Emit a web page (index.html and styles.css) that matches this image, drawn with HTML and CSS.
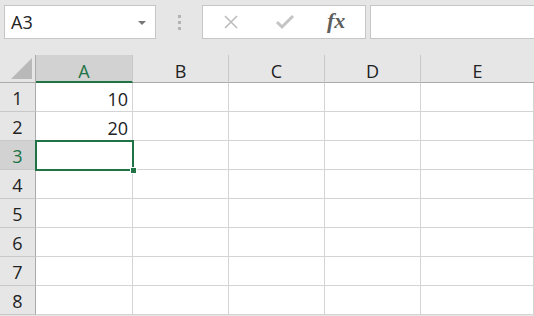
FILE: index.html
```html
<!DOCTYPE html>
<html lang="en">
<head>
    <meta charset="UTF-8">
    <title>Sheet</title>
    <link rel="stylesheet" href="styles.css">
</head>
<body>
    <div class="toolbar">
        <div class="name-box">
            <span>A3</span>
            <span class="arrow"></span>
        </div>
        <div class="grip"><i></i><i></i><i></i></div>
        <div class="buttons">
            <svg class="btn" width="16" height="16" viewBox="0 0 16 16">
                <path d="M2 2 L14 14 M14 2 L2 14" stroke="#bcbcbc" stroke-width="1.6" fill="none"/>
            </svg>
            <svg class="btn" width="20" height="16" viewBox="0 0 20 16">
                <path d="M2 8 L7 13 L18 2" stroke="#c4c4c4" stroke-width="3" fill="none"/>
            </svg>
            <span class="fx">fx</span>
        </div>
        <div class="formula"></div>
    </div>

    <div class="sheet">
        <div class="corner"><span class="tri"></span></div>
        <div class="col-head active">A</div>
        <div class="col-head">B</div>
        <div class="col-head">C</div>
        <div class="col-head">D</div>
        <div class="col-head last">E</div>

        <div class="row-head">1</div>
        <div class="cell num">10</div><div class="cell"></div><div class="cell"></div><div class="cell"></div><div class="cell"></div>

        <div class="row-head">2</div>
        <div class="cell num">20</div><div class="cell"></div><div class="cell"></div><div class="cell"></div><div class="cell"></div>

        <div class="row-head active">3</div>
        <div class="cell selected"><div class="sel"><span class="handle"></span></div></div><div class="cell"></div><div class="cell"></div><div class="cell"></div><div class="cell"></div>

        <div class="row-head">4</div>
        <div class="cell"></div><div class="cell"></div><div class="cell"></div><div class="cell"></div><div class="cell"></div>

        <div class="row-head">5</div>
        <div class="cell"></div><div class="cell"></div><div class="cell"></div><div class="cell"></div><div class="cell"></div>

        <div class="row-head">6</div>
        <div class="cell"></div><div class="cell"></div><div class="cell"></div><div class="cell"></div><div class="cell"></div>

        <div class="row-head">7</div>
        <div class="cell"></div><div class="cell"></div><div class="cell"></div><div class="cell"></div><div class="cell"></div>

        <div class="row-head">8</div>
        <div class="cell"></div><div class="cell"></div><div class="cell"></div><div class="cell"></div><div class="cell"></div>
    </div>
</body>
</html>
```

FILE: styles.css
```css
body {
    margin: 0;
    background-color: #e6e6e6;
    font-family: 'Open Sans', 'Noto Sans', sans-serif;
    color: #222;
    overflow: hidden;
    width: 534px;
    height: 316px;
}
.toolbar {
    display: flex;
    align-items: center;
    height: 34px;
    padding: 5px 0 16px 4px;
}
.name-box {
    box-sizing: border-box;
    width: 152px;
    height: 34px;
    background-color: #fff;
    border: 1px solid #c6c6c6;
    display: flex;
    align-items: center;
    justify-content: space-between;
    padding: 0 9px 0 6px;
    font-size: 18px;
}
.arrow {
    width: 0;
    height: 0;
    border-left: 4px solid transparent;
    border-right: 4px solid transparent;
    border-top: 4px solid #777;
    margin-top: 2px;
}
.grip {
    width: 46px;
    display: flex;
    flex-direction: column;
    align-items: center;
    gap: 3px;
}
.grip i {
    display: block;
    width: 3px;
    height: 3px;
    background-color: #b4b4b4;
}
.buttons {
    box-sizing: border-box;
    width: 164px;
    height: 34px;
    background-color: #fff;
    border: 1px solid #c6c6c6;
    display: flex;
    align-items: center;
    padding-left: 20px;
}
.btn {
    display: block;
}
.buttons .btn:first-child {
    margin-right: 36px;
}
.fx {
    font-family: 'Liberation Serif', 'DejaVu Serif', serif;
    font-style: italic;
    font-weight: bold;
    font-size: 22px;
    color: #5f5f5f;
    margin-left: 32px;
    margin-top: -2px;
}
.formula {
    box-sizing: border-box;
    flex: 1;
    height: 34px;
    margin-left: 4px;
    background-color: #fff;
    border: 1px solid #c6c6c6;
    border-right: none;
}
.sheet {
    display: grid;
    grid-template-columns: 36px 97px 96px 96px 96px 113px;
    grid-template-rows: 28px repeat(8, 29px);
    background-color: #fff;
}
.corner {
    background-color: #e6e6e6;
    border-right: 1px solid #ababab;
    border-bottom: 1px solid #ababab;
    box-sizing: border-box;
    position: relative;
}
.tri {
    position: absolute;
    right: 3px;
    bottom: 3px;
    width: 0;
    height: 0;
    border-left: 21px solid transparent;
    border-bottom: 21px solid #b9b9b9;
}
.col-head {
    box-sizing: border-box;
    background-color: #e6e6e6;
    border-right: 1px solid #c8c8c8;
    border-bottom: 1px solid #ababab;
    display: flex;
    align-items: center;
    justify-content: center;
    font-size: 18px;
    padding-top: 4px;
}
.col-head.last {
    border-right: none;
}
.col-head.active {
    background-color: #d2d2d2;
    color: #217346;
    border-bottom: 2px solid #217346;
    padding-top: 5px;
}
.row-head {
    box-sizing: border-box;
    background-color: #e6e6e6;
    border-right: 1px solid #ababab;
    border-bottom: 1px solid #c8c8c8;
    display: flex;
    align-items: center;
    justify-content: center;
    font-size: 18px;
    padding-top: 2px;
}
.row-head.active {
    background-color: #d2d2d2;
    color: #217346;
}
.cell {
    box-sizing: border-box;
    border-right: 1px solid #d4d4d4;
    border-bottom: 1px solid #d4d4d4;
    font-size: 18px;
    display: flex;
    align-items: center;
    position: relative;
}
.cell.num {
    justify-content: flex-end;
    padding-right: 4px;
    padding-top: 3px;
}
.sel {
    position: absolute;
    top: -1px;
    left: -1px;
    right: -2px;
    bottom: -2px;
    border: 2px solid #217346;
    z-index: 2;
}
.handle {
    position: absolute;
    right: -5px;
    bottom: -5px;
    width: 5px;
    height: 5px;
    background-color: #217346;
    border: 1px solid #fff;
}
```
